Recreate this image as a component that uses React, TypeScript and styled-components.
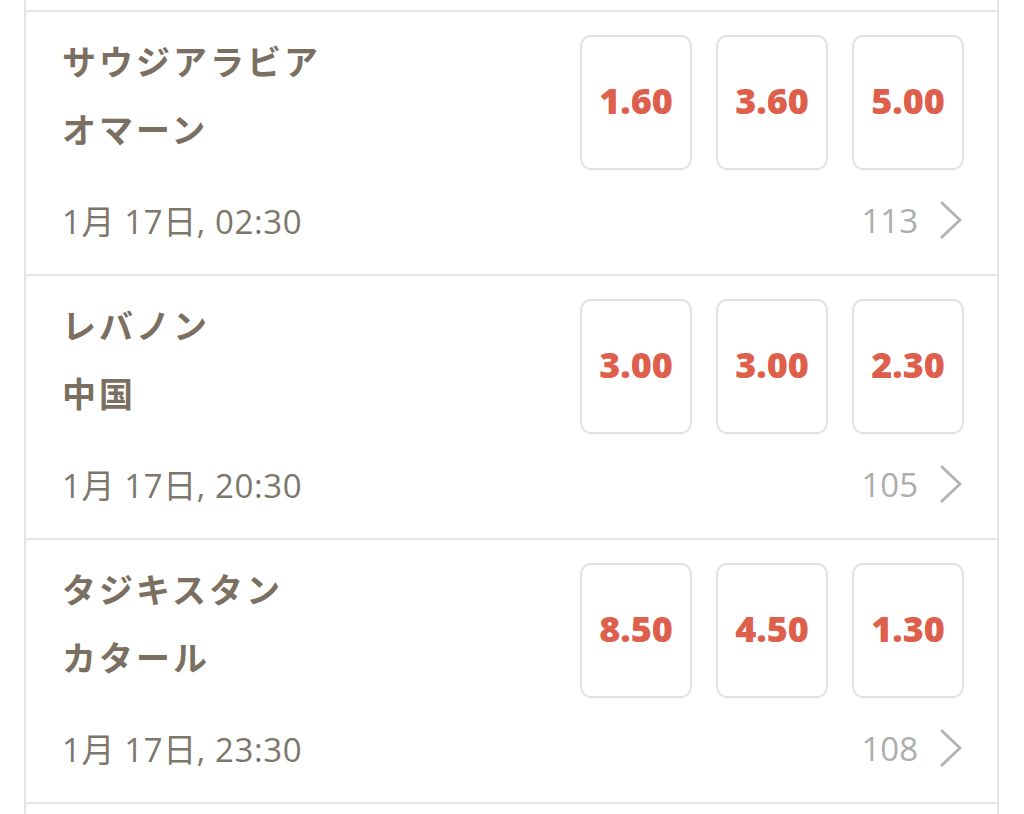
import styled, { createGlobalStyle } from 'styled-components';

const GlobalStyle = createGlobalStyle`
  html, body {
    margin: 0;
    padding: 0;
    background: #ffffff;
    overflow: hidden;
  }
  body {
    font-family: "Open Sans", "Noto Sans CJK JP", sans-serif;
  }
`;

type Match = {
  home: string;
  away: string;
  odds: [string, string, string];
  date: string;
  markets: number;
};

const matches: Match[] = [
  { home: 'サウジアラビア', away: 'オマーン', odds: ['1.60', '3.60', '5.00'], date: '1月 17日, 02:30', markets: 113 },
  { home: 'レバノン', away: '中国', odds: ['3.00', '3.00', '2.30'], date: '1月 17日, 20:30', markets: 105 },
  { home: 'タジキスタン', away: 'カタール', odds: ['8.50', '4.50', '1.30'], date: '1月 17日, 23:30', markets: 108 },
];

const List = styled.div`
  margin: 0 25px 0 24px;
  border-left: 2px solid #e7e5e2;
  border-right: 2px solid #e7e5e2;
  padding-top: 10px;
  min-height: 814px;
  box-sizing: border-box;
`;

const Row = styled.div`
  border-top: 2px solid #e7e5e2;
  padding: 23px 33px 34px 36px;
  display: flex;
  flex-direction: column;
`;

const Top = styled.div`
  display: flex;
  justify-content: space-between;
  align-items: flex-start;
  height: 136px;
`;

const Teams = styled.div`
  display: flex;
  flex-direction: column;
  margin-top: -8px;
`;

const Team = styled.div`
  font-family: "Noto Sans CJK JP", sans-serif;
  font-weight: 700;
  font-size: 34px;
  letter-spacing: 3px;
  line-height: 68px;
  color: #7a6f61;
`;

const Odds = styled.div`
  display: flex;
  gap: 24px;
`;

const OddButton = styled.button`
  width: 112px;
  height: 135px;
  box-sizing: border-box;
  border: 2px solid #e4e2e0;
  border-radius: 11px;
  background: #ffffff;
  color: #dd5f4c;
  font-family: "Open Sans", sans-serif;
  font-weight: 800;
  font-size: 36px;
  display: flex;
  align-items: center;
  justify-content: center;
  padding: 0 0 4px;
`;

const Footer = styled.div`
  margin-top: 29px;
  height: 40px;
  display: flex;
  align-items: center;
  justify-content: space-between;
`;

const DateText = styled.span`
  font-family: "Open Sans", "Noto Sans CJK JP", sans-serif;
  font-size: 33px;
  letter-spacing: 0.6px;
  color: #7c766b;
`;

const More = styled.div`
  display: flex;
  align-items: center;
  gap: 20px;
  font-family: "Open Sans", sans-serif;
  font-size: 33px;
  color: #adadad;
`;

const Chevron = () => (
  <svg width="26" height="38" viewBox="0 0 26 38" fill="none">
    <path d="M4 2 L22 19 L4 36" stroke="#b3b3b3" strokeWidth="3" strokeLinecap="round" strokeLinejoin="round" />
  </svg>
);

const Stub = styled.div`
  border-top: 2px solid #e7e5e2;
  height: 20px;
`;

export default function App() {
  return (
    <>
      <GlobalStyle />
      <List>
        {matches.map((m) => (
          <Row key={m.home}>
            <Top>
              <Teams>
                <Team>{m.home}</Team>
                <Team>{m.away}</Team>
              </Teams>
              <Odds>
                {m.odds.map((o, i) => (
                  <OddButton key={i}>{o}</OddButton>
                ))}
              </Odds>
            </Top>
            <Footer>
              <DateText>{m.date}</DateText>
              <More>
                {m.markets}
                <Chevron />
              </More>
            </Footer>
          </Row>
        ))}
        <Stub />
      </List>
    </>
  );
}
